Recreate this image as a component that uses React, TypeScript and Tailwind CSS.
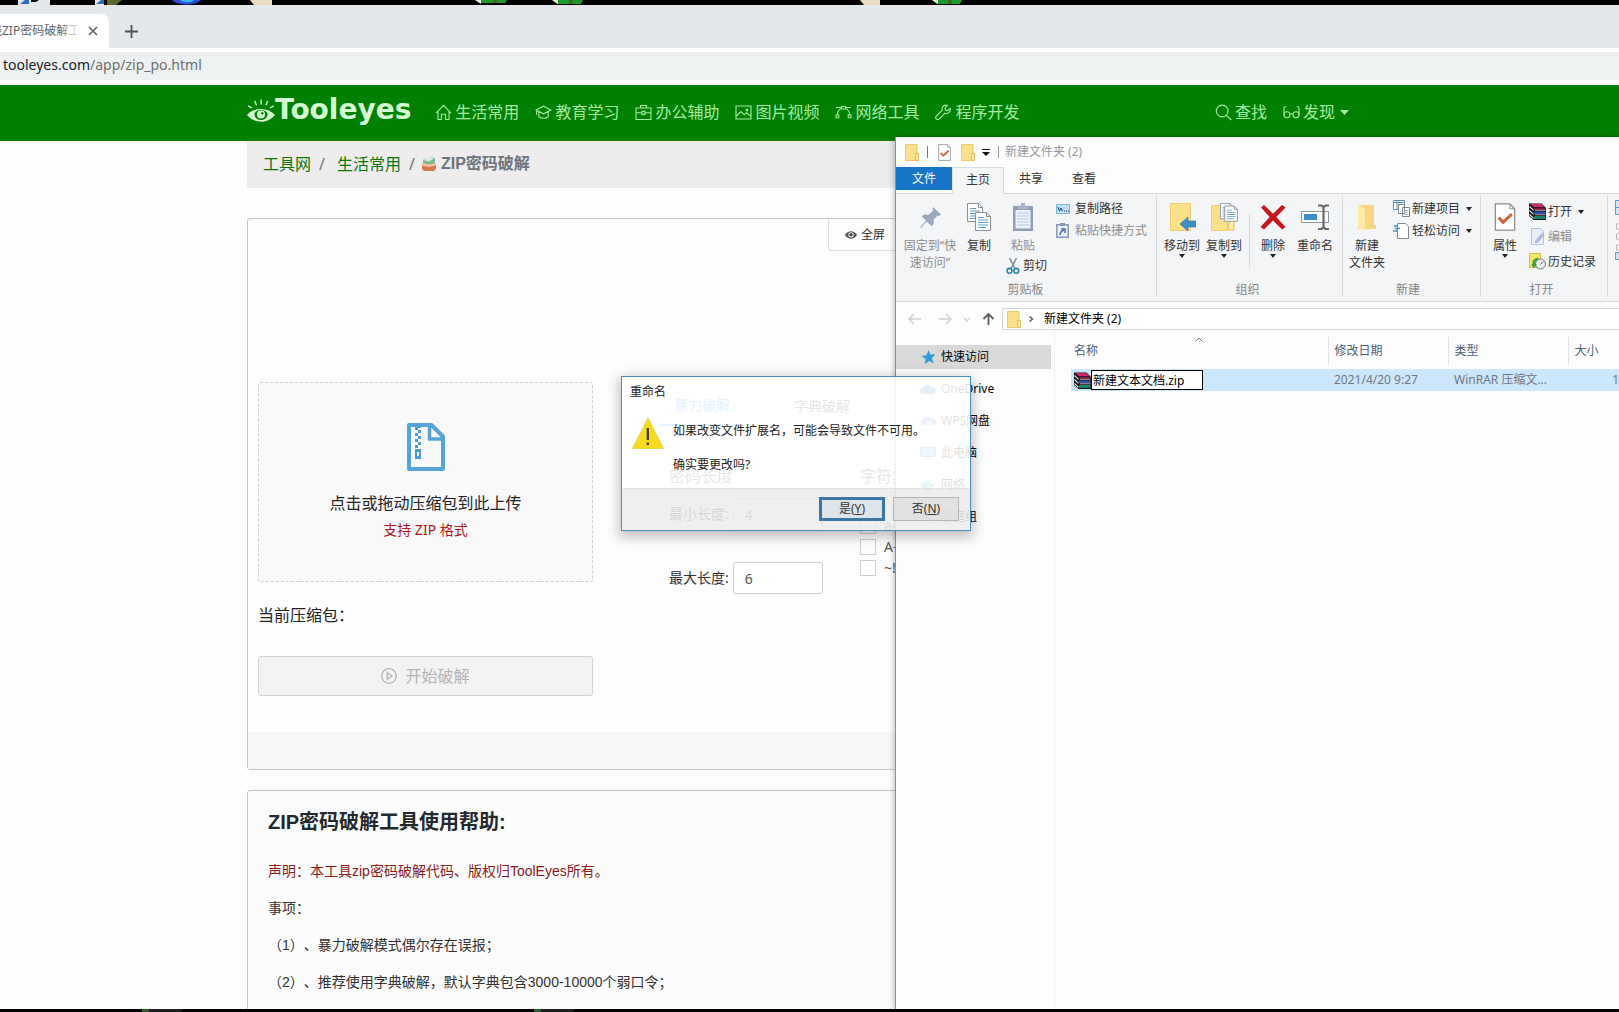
import { JSX, ReactNode, useState } from 'react'

type IconProps = { className?: string }

/* ---------- site icons ---------- */

function LineIcon({ children, className = 'size-[17px]' }: { children: ReactNode; className?: string }): JSX.Element {
  return (
    <svg viewBox="0 0 17 17" fill="none" stroke="currentColor" strokeWidth="1.1" className={`shrink-0 ${className}`}>
      {children}
    </svg>
  )
}

const HomeIcon = () => (
  <LineIcon>
    <path d="M1 9.2 8.5 1.3 16 9.2M3 7.4v8.1h3.4v-5.2h4.2v5.2H14V7.4" />
  </LineIcon>
)

const SchoolIcon = () => (
  <LineIcon>
    <path d="M1 6 8.5 2.2 16 6l-7.500 3.800zM3.800 7.600v5.200c2.600 2 6.800 2 9.400 0V7.600M1.500 6.300v4.400" />
  </LineIcon>
)

const BriefcaseIcon = () => (
  <LineIcon>
    <path d="M1 4h15v11.500H1zM5.500 4V1.500h6V4M1 8.800h6M10 8.800h6M7 7.400h3v3H7z" />
  </LineIcon>
)

const ImageIcon = () => (
  <LineIcon>
    <path d="M1 2h15v13H1zM1.500 12l4.500-4.500 3.300 3.300 2.200-2L15.500 12M11.300 5.200h1.400v1.400h-1.400z" />
  </LineIcon>
)

const BezierIcon = () => (
  <LineIcon>
    <path d="M6.500 4.500C3.800 5.400 2.600 7.600 2.300 11M10.500 4.500c2.700.9 3.900 3.100 4.200 6.500M1 3.500h5.500M10.500 3.500H16M6.500 2.500h4v2.500h-4zM1 11h2.800v2.800H1zM13.200 11H16v2.800h-2.800z" />
  </LineIcon>
)

const WrenchIcon = () => (
  <LineIcon>
    <path d="M15.200 4.300 12.700 6.600l-2.200-.5-.5-2.200 2.400-2.500c-2.200-.7-4.400.3-5.100 2.300-.3.900-.2 1.700 0 2.500L1.400 12c-.9 1-.9 2.200-.1 3 .8.900 2.100.8 3-.1l5.700-5.700c2.600.9 5.900-.9 5.200-4.900z" />
  </LineIcon>
)

const SearchIcon = () => (
  <LineIcon>
    <circle cx="7.200" cy="7" r="5.900" />
    <path d="M11.500 11.300 16.300 16" />
  </LineIcon>
)

const GlassesIcon = () => (
  <LineIcon>
    <circle cx="4" cy="10.800" r="3" />
    <circle cx="13" cy="10.800" r="3" />
    <path d="M1 10.800V4.500C1 3 2 2.500 3.200 2.800M16 10.800V4.500c0-1.500-1-2-2.200-1.700M7 10.300c1-.7 2-.7 3 0" />
  </LineIcon>
)

function LogoEye(): JSX.Element {
  return (
    <svg viewBox="0 0 28 25" className="h-[25px] w-7 shrink-0">
      <path d="M0 17c7-8 21-8 28 0-7 9-21 9-28 0z" fill="#d3ffd3" />
      <path d="M7.500 15.500c1-2.500 3.500-3.500 6.500-3.500s5.500 1 6.500 3.500c.3 4-2.500 6.500-6.500 6.500s-6.800-2.500-6.500-6.500z" fill="#008000" />
      <circle cx="14" cy="16.500" r="4" fill="#d3ffd3" />
      <circle cx="15.300" cy="15.200" r="1.200" fill="#008000" />
      <path
        d="M14.200 6.500V1.500M9.500 7.300 7.800 3M19 7.300 20.600 3M5 10 1.200 7.800M23 10l3.800-2.200"
        stroke="#d3ffd3"
        strokeWidth="1.400"
      />
    </svg>
  )
}

function BoxIcon(): JSX.Element {
  return (
    <svg viewBox="0 0 16 16" className="size-4 shrink-0">
      <path d="M3 3l9-1.500 2 1V8l-6 1-6-1V4z" fill="#7fb98c" />
      <path d="M2 4l6-2.500 5 1L8 5.500z" fill="#dcebe0" />
      <path d="M1 8l7 1.500L15 8v5l-2 2H3l-2-2z" fill="#d67a4b" />
      <path d="M1 7l7 1.500L15 7v2.500L8 11 1 9.500z" fill="#f3c0a2" />
    </svg>
  )
}

function ZipFileIcon(): JSX.Element {
  return (
    <svg viewBox="0 0 38 48" className="h-12 w-[38px]">
      <path d="M2 2h22.500L36 13.500V46H2z" fill="none" stroke="#57a5d8" strokeWidth="4" strokeLinejoin="round" />
      <path d="M22.500 3v13H35" fill="none" stroke="#57a5d8" strokeWidth="3.500" />
      <g fill="#4b9bd0">
        <path d="M8 4h3v3H8zM11 7h3v3h-3zM8 10h3v3H8zM11 13h3v3h-3zM8 16h3v3H8zM11 19h3v3h-3zM8 22h3v3H8zM11 4h3v1h-3z" />
        <path d="M8 26h6v10H8zm2 3v4h2v-4z" fillRule="evenodd" />
      </g>
    </svg>
  )
}

/* ---------- explorer icons ---------- */

function FolderIcon({ className = 'h-[17px] w-[14px]' }: IconProps): JSX.Element {
  return (
    <svg viewBox="0 0 14 17" className={`shrink-0 ${className}`}>
      <path d="M.5.500h11.500v16H.5z" fill="#fbe08a" stroke="#ecca68" />
      <path d="M10.500 9.500h3v7h-3z" fill="#fdeaa6" stroke="#e3bd55" />
    </svg>
  )
}

function CheckDoc({ className = 'h-[17px] w-[13px]' }: IconProps): JSX.Element {
  return (
    <svg viewBox="0 0 22 29" className={`shrink-0 ${className}`}>
      <path d="M1 1h15l5 5v22H1z" fill="#fff" stroke="#8d8d8d" strokeWidth="1.300" />
      <path d="M16 1v5h5" fill="none" stroke="#8d8d8d" />
      <path d="M4.500 15l4.500 5 9-8.500" fill="none" stroke="#d2613c" strokeWidth="3" />
    </svg>
  )
}

function PinIcon(): JSX.Element {
  return (
    <svg viewBox="0 0 28 28" className="size-7">
      <path
        d="M17 4l8 7.500-2 1.500-1.500-.5-4 4.500.5 4-2.500 2-5-4.500L5 25l-.8-.8L10 17.500 5.800 13.500 8 11.500l4.500.3 4.700-4-.7-1.700z"
        fill="#9aa7bf"
      />
    </svg>
  )
}

function Sheet({ x, y }: { x: number; y: number }): JSX.Element {
  return (
    <g transform={`translate(${x} ${y})`}>
      <path d="M.5.500h11l4 4v14h-15z" fill="#fff" stroke="#8a8f98" />
      <path d="M11.500.500v4h4" fill="none" stroke="#8a8f98" />
      <path d="M3 5.500h6M3 8h10M3 10.500h10M3 13h10M3 15.500h8" stroke="#5e9dcc" />
    </g>
  )
}

const CopyIcon = () => (
  <svg viewBox="0 0 28 28" className="size-7">
    <Sheet x={2} y={0} />
    <Sheet x={10} y={9} />
  </svg>
)

const PasteIcon = () => (
  <svg viewBox="0 0 28 28" className="size-7">
    <path d="M4 3h20v25H4z" fill="#8e9dbd" />
    <path d="M6.500 7h15v18.500h-15z" fill="#eef2fa" />
    <path d="M9 2.500h3V0h4v2.500h3V6H9z" fill="#a9b4cb" />
    <path d="M8 10h12M8 13h12M8 16h12M8 19h12M8 22h12" stroke="#b7c6e2" />
  </svg>
)

const MoveIcon = () => (
  <svg viewBox="0 0 28 28" className="size-7">
    <path d="M2.500.500h20v27h-20z" fill="#fbdf89" stroke="#f0cd6d" />
    <path d="M28 18v6h-8v4l-8-7 8-7v4z" fill="#3f8fc9" stroke="#2a74ab" strokeWidth=".6" />
  </svg>
)

const CopyToIcon = () => (
  <svg viewBox="0 0 28 28" className="size-7">
    <path d="M1.500 2.500h16v25h-16z" fill="#fbdf89" stroke="#f0cd6d" />
    <path d="M20 13h4v14h-6z" fill="#fdeaa6" stroke="#e3bd55" />
    <g transform="translate(10 0) scale(.85)">
      <Sheet x={0} y={0} />
      <Sheet x={5} y={3} />
    </g>
  </svg>
)

const DeleteIcon = () => (
  <svg viewBox="0 0 28 28" className="size-7">
    <path d="M2 4.500 5 2l9 8.700L23 2l3.500 2.500L17.300 14 26.500 24l-3.300 2.500L14 17.500l-9 9L1.500 24l9.200-10z" fill="#c4161c" />
  </svg>
)

const RenameIcon = () => (
  <svg viewBox="0 0 28 28" className="size-7">
    <path d="M.5 8.500h27v11H.5z" fill="#fff" stroke="#8a98a5" />
    <path d="M3 11h13v6H3z" fill="#3c8ec6" />
    <path d="M17 2.500h3.500l2 1.500 2-1.500H28M17 26h3.500l2-1.500 2 1.500H28M22.500 4v21" fill="none" stroke="#6a6a6a" strokeWidth="2.200" />
  </svg>
)

const NewFolderIcon = () => (
  <svg viewBox="0 0 28 28" className="size-7">
    <path d="M5 2h16v20h2v4H5z" fill="#f6d681" />
    <path d="M5 2l7 4v22l-7-3z" fill="#fdeaa9" />
  </svg>
)

function BooksIcon({ className = 'size-[17px]' }: IconProps): JSX.Element {
  return (
    <svg viewBox="0 0 17 17" className={`shrink-0 ${className}`}>
      <path d="M0 .5h12.500L17 5v12H4.500L0 13z" fill="#111" />
      <path d="M1 1h11l4 3.300H5z" fill="#d0286c" />
      <path d="M5 5h11.500v1.700H5z" fill="#8a1740" />
      <path d="M5 8.500h11.500v2.700H5z" fill="#3350a8" />
      <path d="M5 13h11.500v3H5z" fill="#14846a" />
      <path d="M.5 3.500 4.500 7.300M.5 7.500l4 3.800M.5 11.500l4 3.800" stroke="#e9e9e9" strokeWidth="1.100" />
      <path d="M6 7.300h10.500M6 11.800h10.500" stroke="#e9e9e9" strokeWidth=".7" />
    </svg>
  )
}

const SmallSheets = () => (
  <svg viewBox="0 0 17 17" className="size-[17px] shrink-0" fill="#fff">
    <path d="M.5.500h11v9H.5z" stroke="#5b93bd" />
    <path d="M1 2.500h10M4 1v8" stroke="#5b93bd" />
    <path d="M5.500 4.500h6v9h-6zM9.500 7.500h7v9h-7z" stroke="#7c8791" />
    <path d="M11 10.500h4M11 12.500h4M11 14.500h4" stroke="#9fb6c8" />
  </svg>
)

const EasyAccessIcon = () => (
  <svg viewBox="0 0 17 17" className="size-[17px] shrink-0">
    <path d="M4.500 1.500h8l3 3v12h-11z" fill="#fff" stroke="#7c8791" />
    <path d="M0 9h5M2 6.500h5M1 4h4" stroke="#3f8fc9" strokeWidth="1.300" />
  </svg>
)

const EditIcon = () => (
  <svg viewBox="0 0 17 17" className="size-[17px] shrink-0">
    <path d="M2.500.500h9l3 3v13h-12z" fill="#e9effa" stroke="#b4c0d4" />
    <path d="M6 13l7-8 2.500 2-7 8H6z" fill="#a9b9d6" />
  </svg>
)

const HistoryIcon = () => (
  <svg viewBox="0 0 17 17" className="size-[17px] shrink-0">
    <path d="M.5.500h11v14H.5z" fill="#f7e36b" stroke="#d7bd45" />
    <circle cx="11.500" cy="11" r="5" fill="#e9eef0" stroke="#6f7a80" />
    <path d="M11.500 11.500 14 8.500" fill="none" stroke="#555" />
    <path d="M9 4.500C4.500 5.500 3 8 3.500 11.500L2 11l3 4.500L8 11l-2 .3C6 9 7.500 7 9.500 7z" fill="#41a03f" />
  </svg>
)

const CutIcon = () => (
  <svg viewBox="0 0 14 16" className="h-4 w-3.5 shrink-0" fill="none">
    <path d="M3.500 0 9 10.500M10.500 0 5 10.500" stroke="#7c8b99" strokeWidth="1.500" />
    <circle cx="3.500" cy="12.800" r="2.400" stroke="#2a86a8" strokeWidth="1.600" />
    <circle cx="10.300" cy="12.800" r="2.400" stroke="#2a86a8" strokeWidth="1.600" />
  </svg>
)

const PathIcon = () => (
  <svg viewBox="0 0 14 10" className="h-2.5 w-3.5 shrink-0">
    <path d="M.5.500h13v9H.5z" fill="#bfe0f6" stroke="#7fb4d8" />
    <path d="M2 3l1.500 4L5 4l1.500 3M8 7h1M10 7h1M12 7h1" fill="none" stroke="#123a63" />
  </svg>
)

const PasteLinkIcon = () => (
  <svg viewBox="0 0 13 15" className="h-[15px] w-[13px] shrink-0">
    <path d="M.8 1.800h11.400v12.400H.8z" fill="#eef3fb" stroke="#8597b8" strokeWidth="1.500" />
    <path d="M4 0h5v3H4z" fill="#8597b8" />
    <path d="M4 12c0-3 1-4 4-5M5 6h4v4" fill="none" stroke="#4d6ea8" strokeWidth="1.500" />
  </svg>
)

function Caret({ className = '' }: IconProps): JSX.Element {
  return (
    <svg viewBox="0 0 6 4" className={`h-1 w-1.5 shrink-0 ${className}`}>
      <path d="M0 0h6L3 4z" fill="#222" />
    </svg>
  )
}

/* ---------- browser ---------- */

function DesktopStrip(): JSX.Element {
  return (
    <div className="h-[5px] shrink-0 overflow-hidden bg-black">
      <svg width="1000" height="5" viewBox="0 0 1000 5">
        <path d="M18 0h32v5H18zM95 0h9v5h-9z" fill="#e4e6ea" />
        <path d="M20 4l5-4h4v4zM96 4l5-4h3v4z" fill="#2b6bb8" />
        <path d="M31 0h8l-3 2h-5z" fill="#111" />
        <path d="M107 0h15l-6 5h-9z" fill="#59682f" />
        <path d="M172 0h29c-5 6-24 6-29 0z" fill="#2c4bd6" />
        <path d="M180 0h14c-2 3-11 3-14 0z" fill="#35b8ea" />
        <path d="M250 0h22v5h-18zM860 0h20v5h-16z" fill="#ebdcc0" />
        <path d="M475 0h32l-2 3h-25zM552 0h31l-2 4h-24zM932 0h30l-2 4h-23z" fill="#1c9a2c" />
        <path d="M475 0h6v4zM552 0h6v4zM932 0h6v4z" fill="#e8efe0" />
        <path d="M493 0h4v3h-4zM569 0h4v4h-4zM948 0h4v4h-4z" fill="#3f6b22" />
      </svg>
    </div>
  )
}

function BrowserChrome(): JSX.Element {
  return (
    <div className="shrink-0 bg-white pb-[5px]">
      <div className="flex h-[43px] items-end bg-[#e4e8eb]">
        <div className="flex h-[34px] w-[109px] items-center rounded-tr-lg bg-white text-xs text-[#5f6368]">
          <span className="relative -ml-2.5 w-[90px] overflow-hidden whitespace-nowrap">
            线ZIP密码破解工具
            <span className="absolute inset-y-0 right-0 w-5 bg-linear-to-r from-white/0 to-white" />
          </span>
          <button type="button" aria-label="关闭标签页" className="ml-2">
            <svg viewBox="0 0 10 10" className="size-2.5" stroke="#5f6368" strokeWidth="1.600">
              <path d="M1 1l8 8M9 1 1 9" />
            </svg>
          </button>
        </div>
        <button type="button" aria-label="新标签页" className="ml-4 flex h-[34px] items-center">
          <svg viewBox="0 0 13 13" className="size-[13px]" stroke="#4d5156" strokeWidth="1.800">
            <path d="M6.500 0v13M0 6.500h13" />
          </svg>
        </button>
      </div>
      <div className="mt-1 flex h-7 items-center bg-[#eef1f2] pb-0.5 pl-[3px] text-sm text-[#202124]">
        tooleyes.com<span className="text-[#6b6f73]">/app/zip_po.html</span>
      </div>
    </div>
  )
}

const navItems = [
  { label: '生活常用', icon: HomeIcon },
  { label: '教育学习', icon: SchoolIcon },
  { label: '办公辅助', icon: BriefcaseIcon },
  { label: '图片视频', icon: ImageIcon },
  { label: '网络工具', icon: BezierIcon },
  { label: '程序开发', icon: WrenchIcon }
]

function SiteHeader(): JSX.Element {
  return (
    <header className="shrink-0 bg-[#008000] pr-[15px] text-base text-[#a4eba4]">
      <div className="mx-auto flex h-14 max-w-[1110px] items-center pr-2 pb-0.5">
        <a
          href="#"
          className="flex items-center pb-1 font-['DejaVu_Sans',sans-serif] text-[28px] font-bold text-[#d3ffd3]"
        >
          <LogoEye />
          <span className="leading-7">Tooleyes</span>
        </a>
        <nav className="ml-6 flex gap-4">
          {navItems.map(({ label, icon: Icon }) => (
            <a key={label} href="#" className="flex items-center gap-[3px] whitespace-nowrap">
              <Icon />
              {label}
            </a>
          ))}
        </nav>
        <div className="ml-auto flex gap-4">
          <a href="#" className="flex items-center gap-[3px] whitespace-nowrap">
            <SearchIcon />
            查找
          </a>
          <a href="#" className="flex items-center gap-[3px] whitespace-nowrap">
            <GlassesIcon />
            发现
            <svg viewBox="0 0 9 5" className="ml-0.5 h-[5px] w-[9px]" fill="currentColor">
              <path d="M0 0h9L4.500 5z" />
            </svg>
          </a>
        </div>
      </div>
    </header>
  )
}

function Breadcrumb(): JSX.Element {
  return (
    <nav className="flex h-[47px] items-center bg-[#eeecec] pb-0.5 pl-4 text-base whitespace-nowrap text-[#6c757d]">
      <a href="#" className="text-[#0b750b]">
        工具网
      </a>
      <span className="mr-3 ml-2">/</span>
      <a href="#" className="text-[#0b750b]">
        生活常用
      </a>
      <span className="mr-1.5 ml-2">/</span>
      <BoxIcon />
      <span className="ml-1 font-['Liberation_Sans','Noto_Sans_CJK_SC',sans-serif] font-bold">ZIP密码破解</span>
    </nav>
  )
}

function LengthField({ id, label, value }: { id: string; label: string; value: string }): JSX.Element {
  return (
    <div className="flex items-center gap-1 text-sm">
      <label htmlFor={id} className="whitespace-nowrap">
        {label}
      </label>
      <input
        id={id}
        defaultValue={value}
        className="h-8 w-[90px] rounded-[3px] border border-[#cfcfcf] bg-white px-[11px] text-sm text-[#555]"
      />
    </div>
  )
}

function CrackOptions(): JSX.Element {
  const charsets = ['a-z', 'A-Z', '~!@#']
  return (
    <div className="pt-1 text-[#333]">
      <div className="flex gap-9 text-sm">
        <button type="button" className="h-10 border-b-2 border-[#1890ff] px-3.5 text-[#1890ff]">
          暴力破解
        </button>
        <button type="button" className="h-10 px-3.5">
          字典破解
        </button>
      </div>
      <div className="mt-[38px] grid grid-cols-[191px_1fr] pl-[9px]">
        <div>
          <h3 className="text-base leading-6">密码长度</h3>
          <div className="mt-2.5 flex flex-col gap-8">
            <LengthField id="min-length" label="最小长度:" value="4" />
            <LengthField id="max-length" label="最大长度:" value="6" />
          </div>
        </div>
        <div>
          <h3 className="text-base leading-6">字符集</h3>
          <div className="mt-[30px] flex flex-col gap-[5px]">
            {charsets.map((set) => (
              <label key={set} className="flex h-4 items-center gap-2 text-sm text-[#555]">
                <input type="checkbox" className="size-4 appearance-none border border-[#cfcfcf] bg-white" />
                {set}
              </label>
            ))}
          </div>
        </div>
      </div>
    </div>
  )
}

function CrackPanel(): JSX.Element {
  return (
    <section className="mt-[30px] rounded-[3px] border border-[#c4c4c4] bg-[#fdfdfd]">
      <div className="flex justify-end">
        <div className="w-[528px]">
          <button
            type="button"
            className="flex h-8 items-center gap-1 rounded-bl-sm border-b border-l border-[#dedede] pr-3 pl-4 text-xs text-[#333]"
          >
            <svg viewBox="0 0 12 8" className="h-2 w-3">
              <path d="M0 4c3-5 9-5 12 0-3 5-9 5-12 0z" fill="#555" />
              <circle cx="6" cy="3.800" r="2.600" fill="#fff" />
              <circle cx="6" cy="3.800" r="1.700" fill="#444" />
            </svg>
            全屏
          </button>
        </div>
      </div>
      <div className="mt-[131px] grid grid-cols-[335px_1fr] gap-[67px] px-2.5">
        <div>
          <button
            type="button"
            className="flex h-[200px] w-full flex-col items-center rounded-xs border border-dashed border-[#cfcfcf] bg-[#f9f9f9] pt-10"
          >
            <ZipFileIcon />
            <span className="mt-5 text-base leading-6 text-[#222]">点击或拖动压缩包到此上传</span>
            <span className="mt-[5px] text-sm leading-5 text-[#b3161b]">支持 ZIP 格式</span>
          </button>
          <p className="mt-[21px] text-base leading-6 text-[#222]">当前压缩包：</p>
          <button
            type="button"
            disabled
            className="mt-[29px] flex h-10 w-full items-center justify-center gap-2 rounded-[3px] border border-[#d2d2d2] bg-[#f3f3f3] text-base text-[#b4b4b4]"
          >
            <svg viewBox="0 0 16 16" className="size-4" fill="none" stroke="currentColor" strokeWidth="1.300">
              <circle cx="8" cy="8" r="7.300" />
              <path d="M6.200 4.800v6.400L11 8z" />
            </svg>
            开始破解
          </button>
        </div>
        <CrackOptions />
      </div>
      <div className="mt-9 h-[37px] bg-[#f7f7f7]" />
    </section>
  )
}

function HelpCard(): JSX.Element {
  return (
    <section className="mt-5 rounded-[3px] border border-[#c4c4c4] bg-[#fcfcfc] px-5 pt-[17px] pb-16 font-['Liberation_Sans','Noto_Sans_CJK_SC',sans-serif] text-[#333] [text-spacing-trim:space-all]">
      <h2 className="text-xl leading-7 font-bold text-[#24292e]">ZIP密码破解工具使用帮助:</h2>
      <div className="mt-[25px] flex flex-col gap-4 text-sm leading-[21px]">
        <p className="text-[#8b1a1a]">声明：本工具zip密码破解代码、版权归ToolEyes所有。</p>
        <p>事项：</p>
        <p>（1）、暴力破解模式偶尔存在误报；</p>
        <p>（2）、推荐使用字典破解，默认字典包含3000-10000个弱口令；</p>
      </div>
    </section>
  )
}

/* ---------- explorer window ---------- */

function BigButton({
  icon,
  lines,
  caret,
  muted,
  className = 'w-[42px]'
}: {
  icon: ReactNode
  lines: string[]
  caret?: boolean
  muted?: boolean
  className?: string
}): JSX.Element {
  return (
    <button
      type="button"
      className={`flex flex-col items-center self-start pt-[3px] leading-[17px] whitespace-nowrap ${muted ? 'text-[#8d8d8d]' : 'text-[#333]'} ${className}`}
    >
      <span className="mb-1.5">{icon}</span>
      {lines.map((line) => (
        <span key={line}>{line}</span>
      ))}
      {caret && <Caret />}
    </button>
  )
}

function SmallButton({
  icon,
  label,
  caret,
  muted
}: {
  icon: ReactNode
  label: string
  caret?: boolean
  muted?: boolean
}): JSX.Element {
  return (
    <button
      type="button"
      className={`flex h-[17px] items-center whitespace-nowrap ${muted ? 'text-[#8d8d8d]' : 'text-[#333]'}`}
    >
      <span className="mr-0.5 flex w-[17px]">{icon}</span>
      {label}
      {caret && <Caret className="ml-1.5" />}
    </button>
  )
}

function RibbonGroup({
  title,
  className,
  children
}: {
  title: string
  className: string
  children: ReactNode
}): JSX.Element {
  return (
    <div className={`flex h-[101px] shrink-0 flex-col border-r border-[#d9dadb] ${className}`}>
      <div className="flex flex-1 pt-1">{children}</div>
      <div className="h-[15px] pr-2 text-center leading-[15px] text-[#868686]">{title}</div>
    </div>
  )
}

function Ribbon(): JSX.Element {
  return (
    <div className="flex h-[109px] overflow-hidden border-y border-[#dadbdc] bg-[#f4f5f7] pt-[2px]">
      <RibbonGroup title="剪贴板" className="w-[261px] pl-[7px]">
        <BigButton icon={<PinIcon />} lines={['固定到“快', '速访问”']} muted className="w-[54px]" />
        <BigButton icon={<CopyIcon />} lines={['复制']} className="w-11" />
        <div className="flex w-[46px] flex-col items-center">
          <BigButton icon={<PasteIcon />} lines={['粘贴']} muted className="w-11" />
          <button type="button" className="mt-[3px] flex items-center gap-[3px] self-end leading-[17px] text-[#333]">
            <CutIcon />
            剪切
          </button>
        </div>
        <div className="ml-[9px] flex flex-col gap-[5px] self-start">
          <SmallButton icon={<PathIcon />} label="复制路径" />
          <SmallButton icon={<PasteLinkIcon />} label="粘贴快捷方式" muted />
        </div>
      </RibbonGroup>
      <RibbonGroup title="组织" className="w-[186px] pl-1">
        <BigButton icon={<MoveIcon />} lines={['移动到']} caret />
        <BigButton icon={<CopyToIcon />} lines={['复制到']} caret />
        <span className="mr-0.5 ml-1 h-[54px] w-px shrink-0 self-center bg-[#d9dadb]" />
        <BigButton icon={<DeleteIcon />} lines={['删除']} caret />
        <BigButton icon={<RenameIcon />} lines={['重命名']} />
      </RibbonGroup>
      <RibbonGroup title="新建" className="w-[138px] pl-px">
        <BigButton icon={<NewFolderIcon />} lines={['新建', '文件夹']} className="w-[46px]" />
        <div className="ml-[3px] flex flex-col gap-[5px]">
          <SmallButton icon={<SmallSheets />} label="新建项目" caret />
          <SmallButton icon={<EasyAccessIcon />} label="轻松访问" caret />
        </div>
      </RibbonGroup>
      <RibbonGroup title="打开" className="w-[127px] pl-[3px]">
        <BigButton icon={<CheckDoc className="h-7 w-[22px]" />} lines={['属性']} caret />
        <div className="ml-[3px] flex flex-col gap-2 pt-[3px]">
          <SmallButton icon={<BooksIcon />} label="打开" caret />
          <SmallButton icon={<EditIcon />} label="编辑" muted />
          <SmallButton icon={<HistoryIcon />} label="历史记录" />
        </div>
      </RibbonGroup>
      <svg viewBox="0 0 12 64" className="mt-1 ml-[7px] h-16 w-3 shrink-0">
        <path d="M.5.500h14v14H.5zM.5 7.500h14" fill="#cfe8f8" stroke="#4d9fd3" />
        <path d="M1.500 24h5v5h-5zM1.500 34h5v5h-5z" fill="#fff" stroke="#b5b5b5" />
        <path d="M.5 52.500h14v7H.5z" fill="#cfe8f8" stroke="#4d9fd3" />
        <path d="M1.500 45h6v5h-6z" fill="#fff" stroke="#b5b5b5" />
      </svg>
    </div>
  )
}

function AddressRow(): JSX.Element {
  return (
    <div className="flex items-center pt-1.5">
      <div className="flex w-[106px] shrink-0 items-center pl-3">
        <svg viewBox="0 0 88 14" className="h-3.5 w-[88px]" fill="none">
          <path d="M13 7H1M6 2 1 7l5 5M31 7h12M38 2l5 5-5 5" stroke="#cfcfcf" strokeWidth="1.400" />
          <path d="M56 6l3 3 3-3" stroke="#d0d0d0" strokeWidth="1.400" />
          <path d="M80.500 13V2M75.500 7l5-5 5 5" stroke="#5c5c5c" strokeWidth="1.800" />
        </svg>
      </div>
      <div className="flex h-[22px] flex-1 items-center border border-r-0 border-[#d6d6d6] bg-white pl-1">
        <FolderIcon />
        <svg viewBox="0 0 5 8" className="mr-2.5 ml-2 h-2 w-[5px]" fill="none">
          <path d="M.5 1.500 3.500 4 .5 6.500" stroke="#555" strokeWidth="1.400" />
        </svg>
        <span className="text-black">新建文件夹 (2)</span>
      </div>
    </div>
  )
}

const places = [
  {
    label: '快速访问',
    icon: <path d="M8.500 1l1.800 4.500 5-.2-3.500 3.900 2 5-4.600-2.200-4.200 3 .6-5L1.500 7l5-.7z" fill="#2f9bd8" />
  },
  {
    label: 'OneDrive',
    icon: <path d="M3 13a3 3 0 0 1 0-6 4.500 4.500 0 0 1 8.500-.5A3.300 3.300 0 0 1 13 13z" fill="#1e7fcb" />
  },
  {
    label: 'WPS网盘',
    icon: (
      <>
        <path d="M2.500 12a3 3 0 0 1 .5-5 4.500 4.500 0 0 1 8-1 3.500 3.500 0 0 1 3 6.500z" fill="#5a8fd0" />
        <circle cx="9.500" cy="10.500" r="3" fill="#cfe0f3" />
      </>
    )
  },
  {
    label: '此电脑',
    icon: <path d="M.5 2.500h15v9H.5zM5 13.500h6" fill="#6cc3ef" stroke="#3c8fc0" />
  },
  {
    label: '网络',
    icon: <path d="M1 7l9-4v3l5 2-5 3v3L1 12z" fill="#4fb0d6" />
  },
  {
    label: '家庭组',
    icon: <path d="M5 4a3 3 0 1 0 .1 0M11 7a3 3 0 1 0 .1 0" fill="#6fa7c9" />
  }
]

function NavigationPane(): JSX.Element {
  return (
    <ul className="flex w-[159px] shrink-0 flex-col gap-2 border-r border-[#f3f3f3] pt-[15px] pr-[3px]">
      {places.map(({ label, icon }, i) => (
        <li key={label} className={i === 0 ? 'bg-[#d9d9d9]' : ''}>
          <a href="#" className="flex h-6 items-center gap-1 pl-6 text-black">
            <svg viewBox="0 0 17 16" className="h-4 w-[17px]">
              {icon}
            </svg>
            {label}
          </a>
        </li>
      ))}
    </ul>
  )
}

function FileList(): JSX.Element {
  const [name, setName] = useState('新建文本文档.zip')
  return (
    <div className="min-w-0 flex-1 pt-[7px] pl-4">
      <table className="w-full table-fixed border-collapse text-left">
        <thead>
          <tr className="h-7 text-[#4c607a]">
            <th className="relative w-[257px] border-r border-[#e2e2e2] pl-[3px] font-normal">
              名称
              <svg viewBox="0 0 8 5" className="absolute top-0 left-1/2 h-[5px] w-2 -translate-x-1/2" fill="none">
                <path d="M.5 4.500 4 1l3.500 3.500" stroke="#777" />
              </svg>
            </th>
            <th className="w-[120px] border-r border-[#e2e2e2] pl-1.5 font-normal">修改日期</th>
            <th className="w-[120px] border-r border-[#e2e2e2] pl-1.5 font-normal">类型</th>
            <th className="pl-1.5 font-normal">大小</th>
          </tr>
        </thead>
        <tbody>
          <tr>
            <td colSpan={4} className="h-1" />
          </tr>
          <tr className="h-[22px] bg-[#cce6fd] text-[#6d7784]">
            <td className="p-0 pl-[3px]">
              <div className="flex items-center">
                <BooksIcon />
                <input
                  aria-label="文件名"
                  value={name}
                  onChange={(e) => setName(e.target.value)}
                  className="h-5 w-28 border border-black bg-white px-px text-xs text-black outline-none"
                />
              </div>
            </td>
            <td className="p-0 pl-1.5 whitespace-nowrap">2021/4/20 9:27</td>
            <td className="p-0 pl-1.5 whitespace-nowrap">WinRAR 压缩文...</td>
            <td className="p-0 text-right">1</td>
          </tr>
        </tbody>
      </table>
    </div>
  )
}

function ExplorerWindow(): JSX.Element {
  return (
    <div className="absolute top-[137px] right-0 bottom-[3px] left-[895px] flex flex-col overflow-hidden border-l border-[#8f8f8f] bg-[#fdfdfd] text-xs shadow-[-1px_0_6px_rgba(0,0,0,0.25)]">
      <div className="flex h-[30px] shrink-0 items-center pl-[9px] text-[#999]">
        <FolderIcon />
        <span className="mr-2.5 ml-2 h-3 w-px bg-[#777]" />
        <CheckDoc />
        <FolderIcon className="ml-2.5 h-[17px] w-[14px]" />
        <svg viewBox="0 0 8 7" className="mr-2 ml-[7px] h-[7px] w-2">
          <path d="M0 0h8v1H0zM0 3h8L4 7z" fill="#111" />
        </svg>
        <span className="mr-1.5 h-3 w-px bg-[#999]" />
        新建文件夹 (2)
      </div>
      <div className="flex h-[26px] shrink-0 text-[#333]">
        <button type="button" className="h-[23px] w-14 bg-[#1874c5] text-white">
          文件
        </button>
        <button
          type="button"
          className="relative -mb-px w-[52px] border border-b-0 border-[#dadbdc] bg-[#f4f5f7] pb-0.5"
        >
          主页
        </button>
        <button type="button" className="w-[54px] pb-0.5">
          共享
        </button>
        <button type="button" className="w-[52px] pb-0.5">
          查看
        </button>
      </div>
      <Ribbon />
      <AddressRow />
      <div className="flex flex-1">
        <NavigationPane />
        <FileList />
      </div>
    </div>
  )
}

function RenameDialog(): JSX.Element {
  return (
    <div
      role="dialog"
      aria-label="重命名"
      className="absolute top-[376px] left-[621px] flex w-[350px] flex-col border border-[#4a90bf] text-xs text-[#222] shadow-[0_4px_12px_2px_rgba(0,0,0,0.25)]"
    >
      <div className="bg-white/88 px-2 pt-1.5 leading-[18px]">重命名</div>
      <div className="flex h-[87px] bg-white/88 pt-4 pl-2.5">
        <svg viewBox="0 0 32 32" className="size-8 shrink-0">
          <path d="M16 1 31.500 31.500H.5z" fill="#f6dc1e" stroke="#d9c32c" strokeWidth=".6" />
          <path d="M15.800 11v12M15.800 25.500v2.500" stroke="#333" strokeWidth="2.200" />
        </svg>
        <div className="ml-[9px] pt-[5px] leading-[17px] whitespace-nowrap">
          <p>如果改变文件扩展名，可能会导致文件不可用。</p>
          <p className="mt-[17px]">确实要更改吗?</p>
        </div>
      </div>
      <div className="flex h-[42px] justify-end gap-2 border-t border-[#e2e2e2] bg-[#ededed]/88 bg-clip-padding pt-2 pr-[11px]">
        <button type="button" className="h-6 w-[66px] border-[3px] border-[#3a76a6] bg-[#dde4ea] leading-none text-[#333]">
          是(<u>Y</u>)
        </button>
        <button type="button" className="h-6 w-[66px] border border-[#b5b5b5] bg-[#dfdfdf]/80 text-[#333]">
          否(<u>N</u>)
        </button>
      </div>
    </div>
  )
}

export default function App(): JSX.Element {
  return (
    <div className="relative flex h-screen flex-col overflow-hidden bg-[#fdfdfd] font-['Noto_Sans','Noto_Sans_CJK_SC',sans-serif]">
      <DesktopStrip />
      <BrowserChrome />
      <SiteHeader />
      <main className="min-h-0 flex-1 overflow-hidden pr-[15px]">
        <div className="mx-auto max-w-[1110px]">
          <Breadcrumb />
          <CrackPanel />
          <HelpCard />
        </div>
      </main>
      <footer className="h-[3px] shrink-0 bg-black">
        <svg width="700" height="3" viewBox="0 0 700 3">
          <path d="M149 0h33v3h-33zM541 0h33v3h-33z" fill="#1d1d1f" />
          <path d="M142 0h7v3h-7zM534 0h7v3h-7z" fill="#2c5a34" />
        </svg>
      </footer>
      <ExplorerWindow />
      <RenameDialog />
    </div>
  )
}
